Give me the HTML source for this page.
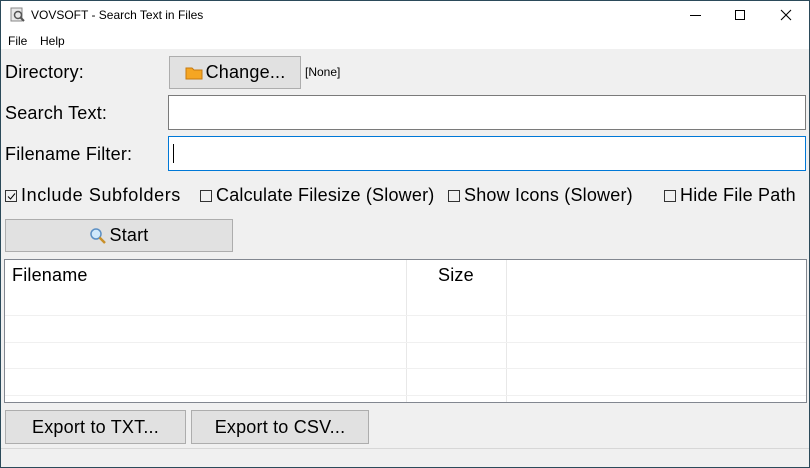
<!DOCTYPE html>
<html><head><style>
*{margin:0;padding:0;box-sizing:border-box}
body{width:810px;height:468px;overflow:hidden;background:#f0f0f0;font-family:"Liberation Sans",sans-serif;color:#000;position:relative}
.a{position:absolute}
.lbl{font-size:18px;letter-spacing:0.2px}
.btn{position:absolute;background:#e1e1e1;border:1px solid #adadad;font-size:18px;display:flex;align-items:center;justify-content:center;letter-spacing:0.2px}
.inp{position:absolute;background:#fff;border:1px solid #7a7a7a}
.cb{display:inline-block;width:12px;height:12px;border:1px solid #333;vertical-align:-1px;margin-right:4px;position:relative}
</style></head><body>
<div class="a" style="left:0;top:0;width:810px;height:49px;background:#fff"></div>
<svg class="a" style="left:10px;top:7px" width="16" height="16"><rect x="1" y="1" width="11" height="13" fill="#e8e8e8" stroke="#888"/><circle cx="8" cy="8" r="3.5" fill="none" stroke="#555" stroke-width="1.5"/><line x1="10.5" y1="10.5" x2="14" y2="14" stroke="#555" stroke-width="2"/></svg>
<div class="a" style="left:31px;top:8px;font-size:12px">VOVSOFT - Search Text in Files</div>
<div class="a" style="left:690px;top:15px;width:11px;height:1px;background:#000"></div>
<div class="a" style="left:735px;top:10px;width:10px;height:10px;border:1px solid #000"></div>
<svg class="a" style="left:780px;top:9px" width="12" height="12"><path d="M1 1L11 11M11 1L1 11" stroke="#000" stroke-width="1.1"/></svg>
<div class="a" style="left:8px;top:34px;font-size:12px">File</div>
<div class="a" style="left:40px;top:34px;font-size:12px">Help</div>

<div class="a lbl" style="left:5px;top:62px">Directory:</div>
<div class="btn" style="left:169px;top:56px;width:132px;height:33px"><svg width="18" height="14" style="margin-right:3px"><path d="M1 2h6l2 2h8v9H1z" fill="#f5a623" stroke="#c87a10"/></svg>Change...</div>
<div class="a" style="left:305px;top:65px;font-size:12px">[None]</div>

<div class="a lbl" style="left:5px;top:103px">Search Text:</div>
<div class="inp" style="left:168px;top:95px;width:638px;height:35px"></div>
<div class="a lbl" style="left:5px;top:144px">Filename Filter:</div>
<div class="inp" style="left:168px;top:136px;width:638px;height:35px;border-color:#0078d7"><div class="a" style="left:4px;top:7px;width:1px;height:19px;background:#000"></div></div>

<div class="a lbl" style="left:5px;top:185px;white-space:nowrap;letter-spacing:0.6px"><span class="cb"><svg class="a" style="left:1px;top:1px" width="9" height="9"><path d="M1 4.5l2.5 2.5L8 1.5" stroke="#000" fill="none"/></svg></span>Include Subfolders</div>
<div class="a lbl" style="left:200px;top:185px;white-space:nowrap"><span class="cb"></span>Calculate Filesize (Slower)</div>
<div class="a lbl" style="left:448px;top:185px;white-space:nowrap"><span class="cb"></span>Show Icons (Slower)</div>
<div class="a lbl" style="left:664px;top:185px;white-space:nowrap"><span class="cb"></span>Hide File Path</div>

<div class="btn" style="left:5px;top:219px;width:228px;height:33px"><svg width="18" height="18" style="margin-right:2px"><circle cx="7" cy="7" r="5" fill="#cfe8fb" stroke="#5b8fc4" stroke-width="1.5"/><line x1="10.5" y1="10.5" x2="16" y2="16" stroke="#c8902a" stroke-width="2.5"/></svg>Start</div>

<div class="a" style="left:4px;top:259px;width:803px;height:144px;background:#fff;border:1px solid #828790">
<div class="a lbl" style="left:7px;top:5px">Filename</div>
<div class="a lbl" style="left:433px;top:5px">Size</div>
<div class="a" style="left:401px;top:0;width:1px;height:142px;background:#e8e8e8"></div>
<div class="a" style="left:501px;top:0;width:1px;height:142px;background:#e8e8e8"></div>
<div class="a" style="left:0;top:55px;width:801px;height:1px;background:#f0f0f0"></div>
<div class="a" style="left:0;top:82px;width:801px;height:1px;background:#f0f0f0"></div>
<div class="a" style="left:0;top:108px;width:801px;height:1px;background:#f0f0f0"></div>
<div class="a" style="left:0;top:135px;width:801px;height:1px;background:#f0f0f0"></div>
</div>

<div class="btn" style="left:5px;top:410px;width:181px;height:34px">Export to TXT...</div>
<div class="btn" style="left:191px;top:410px;width:178px;height:34px">Export to CSV...</div>
<div class="a" style="left:0;top:448px;width:810px;height:1px;background:#d7d7d7"></div>
<div class="a" style="left:0;top:0;width:810px;height:468px;border:1px solid #2b4a5a"></div>
</body></html>
